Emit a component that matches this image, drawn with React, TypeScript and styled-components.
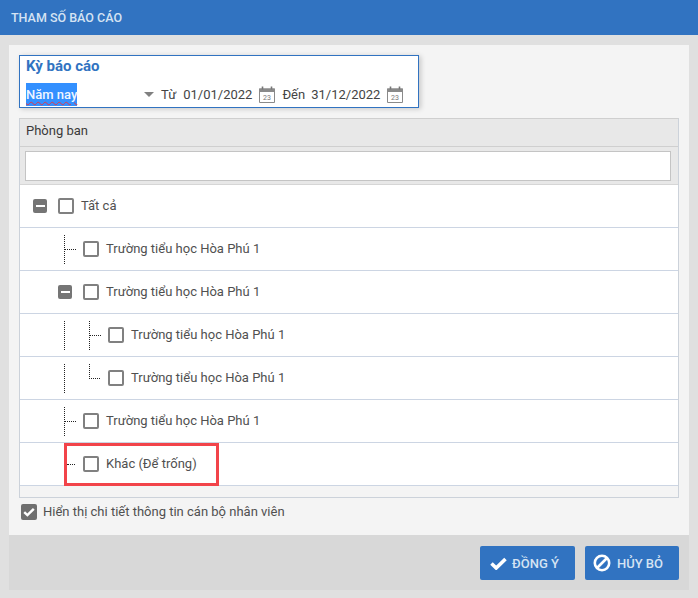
import * as React from 'react'
import styled, { createGlobalStyle } from 'styled-components'

const GlobalStyle = createGlobalStyle`
  html, body {
    margin: 0;
    padding: 0;
    height: 100%;
    background: #e0e0e0;
    font-family: Roboto, "Noto Sans", sans-serif;
    overflow: hidden;
  }
`

type RowData = {
  label: string
  level: number
  guides?: number
  branch?: 'tee' | 'end' | 'stub'
  expander?: boolean
}

const rows: RowData[] = [
  { label: 'Tất cả', level: 0, expander: true },
  { label: 'Trường tiểu học Hòa Phú 1', level: 1, branch: 'tee' },
  { label: 'Trường tiểu học Hòa Phú 1', level: 1, expander: true },
  { label: 'Trường tiểu học Hòa Phú 1', level: 2, guides: 1, branch: 'tee' },
  { label: 'Trường tiểu học Hòa Phú 1', level: 2, guides: 1, branch: 'end' },
  { label: 'Trường tiểu học Hòa Phú 1', level: 1, branch: 'tee' },
  { label: 'Khác (Để trống)', level: 1, branch: 'stub' },
]

export default function App() {
  return (
    <>
      <GlobalStyle />
      <Dialog>
        <Header>THAM SỐ BÁO CÁO</Header>
        <Panel>
          <Body>
            <PeriodBox>
              <PeriodTitle>Kỳ báo cáo</PeriodTitle>
              <PeriodRow>
                <SelectValue>
                  <Selected>Năm nay</Selected>
                  <Caret />
                </SelectValue>
                <DateLabel>Từ</DateLabel>
                <DateValue>01/01/2022</DateValue>
                <CalendarIcon />
                <DateLabel>Đến</DateLabel>
                <EndDateValue>31/12/2022</EndDateValue>
                <CalendarIcon />
              </PeriodRow>
            </PeriodBox>

            <Tree>
              <TreeHead>Phòng ban</TreeHead>
              <FilterRow>
                <FilterInput />
              </FilterRow>
              {rows.map((row, i) => (
                <TreeRow key={i} row={row} />
              ))}
              <TreeTail />
            </Tree>

            <DetailOption>
              <CheckedBox>
                <svg width="12" height="10" viewBox="0 0 12 10">
                  <path d="M1.2 5.2 4.4 8.2 10.8 1.8" fill="none" stroke="#fff" strokeWidth="2.4" />
                </svg>
              </CheckedBox>
              Hiển thị chi tiết thông tin cán bộ nhân viên
            </DetailOption>
          </Body>
          <Footer>
            <ActionButton>
              <svg width="17" height="14" viewBox="0 0 17 14">
                <path d="M1.5 7.5 6.2 12 15.5 3" fill="none" stroke="#fff" strokeWidth="3.6" />
              </svg>
              ĐỒNG Ý
            </ActionButton>
            <ActionButton>
              <BanIcon width="18" height="18" viewBox="0 0 18 18">
                <circle cx="9" cy="9" r="7.2" fill="none" stroke="#fff" strokeWidth="2.6" />
                <path d="M4 14 14 4" stroke="#fff" strokeWidth="2.6" />
              </BanIcon>
              HỦY BỎ
            </ActionButton>
          </Footer>
        </Panel>
      </Dialog>
    </>
  )
}

const TreeRow: React.FC<{ row: RowData }> = ({ row }) => {
  const isOther = row.branch === 'stub'
  return (
    <Row>
      <Indent $level={row.level} $expander={!!row.expander}>
        {Array.from({ length: row.guides ?? 0 }).map((_, i) => (
          <Guide key={i} />
        ))}
        {row.branch === 'tee' && <Tee />}
        {row.branch === 'end' && <Elbow />}
        {row.branch === 'stub' && <Stub />}
        {row.expander && (
          <Expander>
            <span />
          </Expander>
        )}
      </Indent>
      <Box />
      <RowLabel>{row.label}</RowLabel>
      {isOther && <Highlight />}
    </Row>
  )
}

const CalendarIcon = () => (
  <svg width="16" height="17" viewBox="0 0 16 17" style={{ flex: 'none' }}>
    <path d="M.5 3h15v13.5H.5z" fill="none" stroke="#8a8a8a" />
    <path d="M0 2.5h16V6H0z" fill="#8a8a8a" />
    <path d="M3.5 .5v3M12.5 .5v3" stroke="#777" strokeWidth="1.6" />
    <text x="8" y="14" fontSize="7" textAnchor="middle" fill="#777" fontFamily="Roboto, sans-serif">
      23
    </text>
  </svg>
)

const Dialog = styled.div`
  width: 698px;
  height: 598px;
  display: flex;
  flex-direction: column;
  background: #e0e0e0;
`

const Header = styled.div`
  height: 35px;
  flex: none;
  box-sizing: border-box;
  padding: 0 11px;
  display: flex;
  align-items: center;
  background: #3173c1;
  color: #d5e3f3;
  font-size: 12.5px;
  font-weight: 500;
`

const Panel = styled.div`
  margin: 10px 9px 8px;
  flex: 1;
  display: flex;
  flex-direction: column;
`

const Body = styled.div`
  flex: 1;
  background: #f4f4f4;
  padding: 10px 10px 0;
  display: flex;
  flex-direction: column;
`

const PeriodBox = styled.div`
  width: 400px;
  height: 53px;
  box-sizing: border-box;
  border: 1px solid #3173c1;
  background: #fff;
  padding: 0 6px;
  box-shadow: 2px 1px 5px rgba(0, 0, 0, 0.18);
`

const PeriodTitle = styled.div`
  height: 23px;
  line-height: 21px;
  color: #3173c1;
  font-size: 15px;
  font-weight: 700;
`

const PeriodRow = styled.div`
  height: 23px;
  margin-top: 4px;
  display: flex;
  align-items: center;
  font-size: 13px;
  color: #444;
`

const SelectValue = styled.div`
  width: 128px;
  height: 23px;
  flex: none;
  display: flex;
  align-items: center;
  justify-content: space-between;
`

const Selected = styled.span`
  height: 23px;
  line-height: 23px;
  background: #3390ff;
  color: #f0f6ff;
  font-weight: 500;
  text-decoration: underline wavy #e0394a 1px;
  text-underline-offset: 2px;
`

const Caret = styled.span`
  width: 0;
  height: 0;
  border-left: 5px solid transparent;
  border-right: 5px solid transparent;
  border-top: 5px solid #808080;
`

const DateLabel = styled.span`
  margin-left: 7px;
`

const DateValue = styled.span`
  margin: 0 7px;
`

const EndDateValue = styled(DateValue)`
  margin-left: 6px;
`

const Tree = styled.div`
  margin-top: 10px;
  width: 660px;
  height: 380px;
  box-sizing: border-box;
  border: 1px solid #ccd2da;
  border-top-color: #cfcfcf;
  background: #f4f4f4;
`

const TreeHead = styled.div`
  height: 28px;
  box-sizing: border-box;
  padding: 0 0 4px 6px;
  display: flex;
  align-items: center;
  background: #e8e8e8;
  border-bottom: 1px solid #cfcfcf;
  font-size: 13px;
  color: #3a3a3a;
`

const FilterRow = styled.div`
  height: 38px;
  box-sizing: border-box;
  padding: 4px 7px 3px 5px;
  background: #e8e8e8;
  border-bottom: 1px solid #d6d6d6;
`

const FilterInput = styled.div`
  height: 100%;
  box-sizing: border-box;
  border: 1px solid #c4c4c4;
  background: #fff;
`

const Row = styled.div`
  position: relative;
  height: 43px;
  box-sizing: border-box;
  display: flex;
  align-items: center;
  background: #fff;
  border-bottom: 1px solid #ccd5e3;
`

const Indent = styled.div<{ $level: number; $expander: boolean }>`
  width: ${(p) => 38 + p.$level * 25}px;
  height: 100%;
  flex: none;
  box-sizing: border-box;
  padding-left: ${(p) => (p.$expander ? 13 + p.$level * 25 : 44)}px;
  display: flex;
  align-items: center;
`

const Guide = styled.span`
  width: 25px;
  height: 29px;
  flex: none;
  box-sizing: border-box;
  border-left: 1px dotted #222;
`

const Tee = styled.span`
  position: relative;
  width: 11px;
  height: 29px;
  flex: none;
  box-sizing: border-box;
  border-left: 1px dotted #222;

  &::after {
    content: '';
    position: absolute;
    left: 0;
    top: 14px;
    width: 11px;
    border-top: 1px dotted #222;
  }
`

const Elbow = styled.span`
  width: 11px;
  height: 15px;
  flex: none;
  box-sizing: border-box;
  margin-bottom: 14px;
  border-left: 1px dotted #222;
  border-bottom: 1px dotted #222;
`

const Stub = styled.span`
  width: 8px;
  margin-left: 3px;
  flex: none;
  border-top: 1px dotted #222;
`

const Expander = styled.span`
  width: 14px;
  height: 14px;
  flex: none;
  display: flex;
  align-items: center;
  justify-content: center;
  background: #757575;
  border-radius: 2px;

  span {
    width: 9px;
    height: 2px;
    background: #fff;
  }
`

const Box = styled.span`
  width: 16px;
  height: 16px;
  flex: none;
  box-sizing: border-box;
  border: 2px solid #808080;
  border-radius: 2px;
  background: #fff;
`

const RowLabel = styled.span`
  margin-left: 7px;
  padding-bottom: 2px;
  font-size: 13px;
  color: #505050;
`

const Highlight = styled.span`
  position: absolute;
  left: 44px;
  top: 0;
  width: 155px;
  height: 43px;
  box-sizing: border-box;
  border: 3px solid #f2444a;
`

const TreeTail = styled.div`
  height: 10px;
`

const DetailOption = styled.label`
  margin: 6px 0 0 2px;
  display: flex;
  align-items: center;
  gap: 6px;
  font-size: 13px;
  color: #505050;
  line-height: 16px;
`

const CheckedBox = styled.span`
  width: 16px;
  height: 16px;
  display: flex;
  align-items: center;
  justify-content: center;
  background: #6f6f6f;
  border-radius: 2px;
`

const Footer = styled.div`
  height: 55px;
  flex: none;
  box-sizing: border-box;
  padding: 11px 10px 10px 0;
  display: flex;
  justify-content: flex-end;
  gap: 10px;
  background: #d8d8d8;
`

const ActionButton = styled.button`
  height: 34px;
  padding: 0 16px 0 10px;
  display: flex;
  align-items: center;
  gap: 5px;
  border: 0;
  border-radius: 2px;
  background: #3173c1;
  color: #d5e3f3;
  font-family: inherit;
  font-size: 13px;
  font-weight: 500;
  white-space: nowrap;
`

const BanIcon = styled.svg`
  margin: 0 1px 0 -2px;
`
